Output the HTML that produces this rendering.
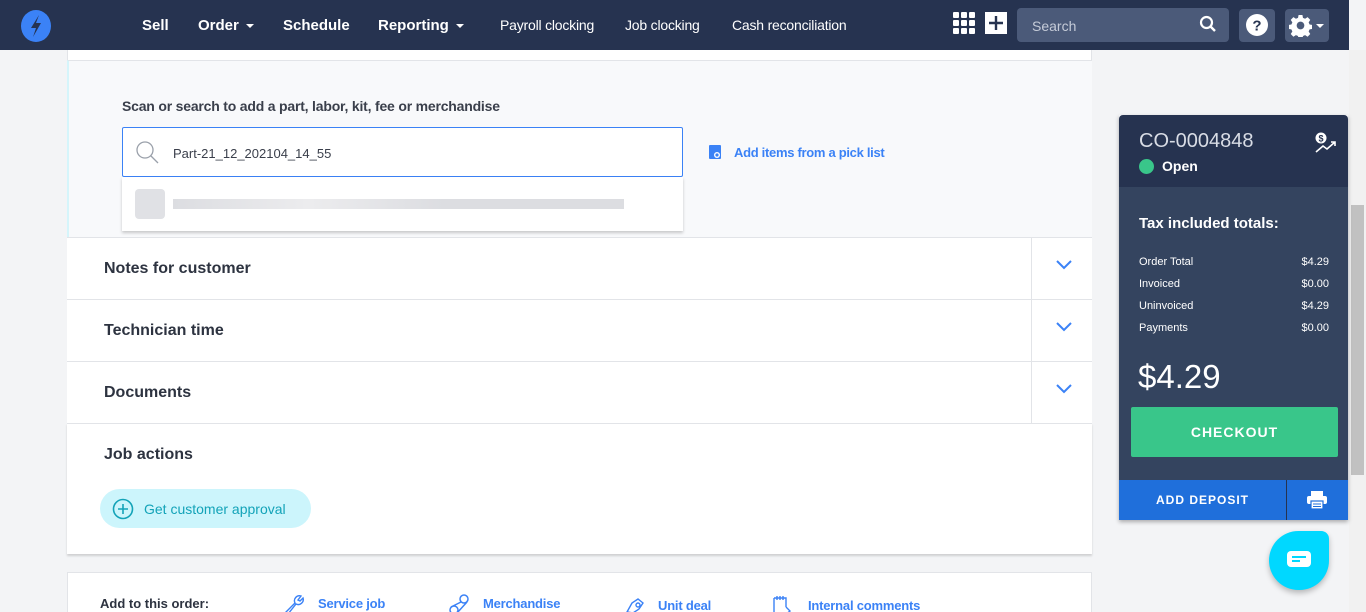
<!DOCTYPE html>
<html><head><style>
*{box-sizing:border-box;margin:0;padding:0}
html,body{width:1366px;height:612px;overflow:hidden}
body{background:#f3f4f6;font-family:"Liberation Sans",sans-serif;position:relative;color:#2d3340}
.nav{position:absolute;left:0;top:0;width:1349px;height:50px;background:#263350;color:#fff}
.nav .i{position:absolute;top:17px;font-size:15px;font-weight:bold}
.nav .s{position:absolute;top:17px;font-size:14px;letter-spacing:-0.2px}
.car{display:inline-block;border:4px solid transparent;border-top:4px solid #fff;border-bottom:0;margin-left:7px;vertical-align:middle}
.abs{position:absolute}
.card{position:absolute;left:67px;width:1025px;background:#fff;border:1px solid #e2e4e8}
.row{position:absolute;left:67px;width:1025px;height:62px;border-top:1px solid #e2e4e8;background:#fff}
.row span{position:absolute;left:37px;top:22px;font-size:16px;font-weight:bold;color:#2d3340}
.row .vd{position:absolute;left:964px;top:0;width:1px;height:61px;background:#e2e4e8}
.chev{position:absolute;left:989px;top:22px}
.rp{position:absolute;left:1119px;width:229px}
.tl{position:absolute;left:20px;font-size:11px;color:#fff}
.tr{position:absolute;right:19px;font-size:11px;color:#fff}
.lk{position:absolute;top:596px;font-size:13px;color:#3b82f6;font-weight:bold;letter-spacing:-0.2px}
</style></head><body>
<div class="nav">
<svg class="abs" style="left:19px;top:9px" width="34" height="34" viewBox="0 0 34 34"><ellipse cx="17" cy="17" rx="15" ry="16" fill="#3b82f6"/><path d="M20 6 L12 19 H17 L14 28 L22 14 H17 Z" fill="#263350"/></svg>
<span class="i" style="left:142px">Sell</span>
<span class="i" style="left:198px">Order<i class="car"></i></span>
<span class="i" style="left:283px">Schedule</span>
<span class="i" style="left:378px">Reporting<i class="car"></i></span>
<span class="s" style="left:500px">Payroll clocking</span>
<span class="s" style="left:625px">Job clocking</span>
<span class="s" style="left:732px">Cash reconciliation</span>
<svg class="abs" style="left:953px;top:12px" width="22" height="22" viewBox="0 0 22 22" fill="#fff"><rect x="0" y="0" width="6" height="6" rx="1"/><rect x="8" y="0" width="6" height="6" rx="1"/><rect x="16" y="0" width="6" height="6" rx="1"/><rect x="0" y="8" width="6" height="6" rx="1"/><rect x="8" y="8" width="6" height="6" rx="1"/><rect x="16" y="8" width="6" height="6" rx="1"/><rect x="0" y="16" width="6" height="6" rx="1"/><rect x="8" y="16" width="6" height="6" rx="1"/><rect x="16" y="16" width="6" height="6" rx="1"/></svg>
<svg class="abs" style="left:985px;top:12px" width="22" height="22"><rect width="22" height="22" fill="#fff"/><path d="M11 4V18M4 11H18" stroke="#263350" stroke-width="2.4"/></svg>
<div class="abs" style="left:1017px;top:8px;width:212px;height:34px;background:#4b5a79;border-radius:4px"><span class="abs" style="left:15px;top:10px;font-size:14px;color:#c5cbd8">Search</span><svg class="abs" style="left:182px;top:7px" width="18" height="18"><circle cx="7.5" cy="7.5" r="5.5" stroke="#fff" stroke-width="2.2" fill="none"/><path d="M11.5 11.5L16 16" stroke="#fff" stroke-width="2.4"/></svg></div>
<div class="abs" style="left:1239px;top:9px;width:36px;height:33px;background:#4b5a79;border-radius:4px"><svg class="abs" style="left:7px;top:5px" width="22" height="22"><circle cx="11" cy="11" r="11" fill="#fff"/><text x="11" y="16.5" font-size="15" font-weight="bold" text-anchor="middle" fill="#263350" font-family="Liberation Sans">?</text></svg></div>
<div class="abs" style="left:1285px;top:9px;width:44px;height:33px;background:#4b5a79;border-radius:4px"><svg class="abs" style="left:4px;top:5px" width="23" height="23" viewBox="0 0 24 24"><path fill="#fff" d="M10 1h4l.6 3 2.2 1 2.6-1.7 2.8 2.8-1.7 2.6 1 2.2 3 .6v4l-3 .6-1 2.2 1.7 2.6-2.8 2.8-2.6-1.7-2.2 1-.6 3h-4l-.6-3-2.2-1-2.6 1.7-2.8-2.8 1.7-2.6-1-2.2-3-.6v-4l3-.6 1-2.2-1.7-2.6 2.8-2.8 2.6 1.7 2.2-1z"/><circle cx="12" cy="12" r="4" fill="#4b5a79"/></svg><i class="car abs" style="left:31px;top:15px;margin:0"></i></div>
</div>
<div class="abs" style="left:1349px;top:50px;width:17px;height:562px;background:#f1f1f1"></div>
<div class="abs" style="left:1351px;top:205px;width:13px;height:270px;background:#c1c1c1"></div>

<div class="abs" style="left:67px;top:50px;width:1025px;height:187px;background:#fff;border-left:1px solid #e2e4e8;border-right:1px solid #e2e4e8"></div>
<div class="abs" style="left:67px;top:60px;width:1025px;height:177px;background:#f8f9fb;border-top:1px solid #e2e4e8;border-left:2px solid #d5f5fb"></div>
<div class="abs" style="left:122px;top:98px;font-size:14px;font-weight:bold;color:#3a3f4b;letter-spacing:-0.2px">Scan or search to add a part, labor, kit, fee or merchandise</div>
<div class="abs" style="left:122px;top:127px;width:561px;height:50px;background:#fff;border:1px solid #3b82f6;border-radius:2px"><svg class="abs" style="left:11px;top:11px" width="28" height="28"><circle cx="11" cy="11" r="8" stroke="#9aa0aa" stroke-width="1.3" fill="none"/><path d="M17 17L24 24" stroke="#9aa0aa" stroke-width="1.3"/></svg><span class="abs" style="left:50px;top:18px;font-size:13px;color:#3a3f4b">Part-21_12_202104_14_55</span></div>
<div class="abs" style="left:122px;top:177px;width:561px;height:54px;background:#fff;box-shadow:0 2px 3px rgba(0,0,0,.2)"><div class="abs" style="left:13px;top:12px;width:30px;height:30px;background:#e0e1e5;border-radius:4px"></div><div class="abs" style="left:51px;top:22px;width:451px;height:10px;background:linear-gradient(90deg,#dcdde1,#ececee 30%,#dcdde1 60%)"></div></div>
<svg class="abs" style="left:708px;top:144px" width="15" height="16"><rect x="1" y="1" width="12" height="14" rx="1" fill="#3b82f6"/><circle cx="9" cy="11" r="3" fill="#fff"/><circle cx="9" cy="11" r="1.6" fill="#3b82f6"/></svg>
<div class="abs" style="left:734px;top:145px;font-size:13px;font-weight:bold;color:#3b82f6;letter-spacing:-0.3px">Add items from a pick list</div>

<div class="row" style="top:237px"><span>Notes for customer</span><div class="vd"></div><svg class="chev" width="16" height="10"><path d="M1 1L8 8L15 1" stroke="#3b82f6" stroke-width="2" fill="none"/></svg></div>
<div class="row" style="top:299px"><span>Technician time</span><div class="vd"></div><svg class="chev" width="16" height="10"><path d="M1 1L8 8L15 1" stroke="#3b82f6" stroke-width="2" fill="none"/></svg></div>
<div class="row" style="top:361px"><span>Documents</span><div class="vd"></div><svg class="chev" width="16" height="10"><path d="M1 1L8 8L15 1" stroke="#3b82f6" stroke-width="2" fill="none"/></svg></div>
<div class="row" style="top:423px;height:131px;box-shadow:0 2px 2px rgba(0,0,0,.15)"><span>Job actions</span>
<div class="abs" style="left:33px;top:65px;width:211px;height:39px;background:#ccf5fc;border-radius:20px"><svg class="abs" style="left:12px;top:9px" width="22" height="22"><circle cx="11" cy="11" r="9.5" stroke="#13a3b8" stroke-width="1.6" fill="none"/><path d="M11 6V16M6 11H16" stroke="#13a3b8" stroke-width="1.6"/></svg><span style="left:44px;top:12px;font-size:14px;font-weight:normal;color:#13a3b8">Get customer approval</span></div></div>

<div class="card" style="top:572px;height:50px"></div>
<div class="abs" style="left:100px;top:596px;font-size:13px;font-weight:bold;color:#2d3340">Add to this order:</div>
<svg class="abs" style="left:283px;top:593px" width="22" height="22"><path d="M3 19L12 10A5 5 0 0 1 18 3L15 7L17 8L20 5A5 5 0 0 1 13 11L5 21Z" stroke="#3b82f6" stroke-width="1.4" fill="none"/></svg>
<span class="lk" style="left:318px">Service job</span>
<svg class="abs" style="left:447px;top:593px" width="24" height="22"><circle cx="17" cy="6" r="4" stroke="#3b82f6" stroke-width="1.5" fill="none"/><circle cx="7" cy="17" r="4" stroke="#3b82f6" stroke-width="1.5" fill="none"/><path d="M14 9L4 14M20 9L10 20" stroke="#3b82f6" stroke-width="1.5"/></svg>
<span class="lk" style="left:483px">Merchandise</span>
<svg class="abs" style="left:624px;top:595px" width="22" height="20"><path d="M3 17L8 8L14 4L19 8L15 14L9 18Z" stroke="#3b82f6" stroke-width="1.4" fill="none"/><circle cx="14" cy="10" r="2" stroke="#3b82f6" stroke-width="1.4" fill="none"/></svg>
<span class="lk" style="left:658px;top:598px">Unit deal</span>
<svg class="abs" style="left:772px;top:595px" width="22" height="20"><path d="M2 3H14V12M2 3V20M5 1V5M8 1V5M11 1V5M14 12L18 16L14 19" stroke="#3b82f6" stroke-width="1.4" fill="none"/></svg>
<span class="lk" style="left:808px;top:598px">Internal comments</span>

<div class="rp" style="top:115px;height:405px;box-shadow:0 2px 4px rgba(0,0,0,.3)">
<div class="abs" style="left:0;top:0;width:229px;height:72px;background:#263350;border-radius:4px 4px 0 0"></div>
<div class="abs" style="left:0;top:72px;width:229px;height:293px;background:#34445f"></div>
<div class="abs" style="left:20px;top:15px;font-size:20px;color:#d8dce5">CO-0004848</div>
<div class="abs" style="left:20px;top:44px;width:15px;height:15px;border-radius:50%;background:#39c68a"></div>
<div class="abs" style="left:43px;top:43px;font-size:14px;font-weight:bold;color:#fff">Open</div>
<svg class="abs" style="left:195px;top:17px" width="24" height="22"><circle cx="7" cy="6" r="5.5" fill="#fff"/><text x="7" y="9.5" font-size="9" font-weight="bold" text-anchor="middle" fill="#263350" font-family="Liberation Sans">$</text><path d="M2 20L9 14L13 17L21 10M17 10H21V14" stroke="#fff" stroke-width="1.6" fill="none"/></svg>
<div class="abs" style="left:20px;top:100px;font-size:15px;font-weight:bold;color:#fff">Tax included totals:</div>
<span class="tl" style="top:141px">Order Total</span><span class="tr" style="top:141px">$4.29</span>
<span class="tl" style="top:163px">Invoiced</span><span class="tr" style="top:163px">$0.00</span>
<span class="tl" style="top:185px">Uninvoiced</span><span class="tr" style="top:185px">$4.29</span>
<span class="tl" style="top:207px">Payments</span><span class="tr" style="top:207px">$0.00</span>
<div class="abs" style="left:19px;top:243px;font-size:33px;color:#fff">$4.29</div>
<div class="abs" style="left:12px;top:292px;width:207px;height:50px;background:#39c68a;border-radius:2px;color:#fff;font-size:14px;font-weight:bold;text-align:center;line-height:50px;letter-spacing:1px">CHECKOUT</div>
<div class="abs" style="left:0;top:365px;width:167px;height:40px;background:#1f6fdb;color:#fff;font-size:12px;font-weight:bold;text-align:center;line-height:40px;letter-spacing:1px">ADD DEPOSIT</div>
<div class="abs" style="left:167px;top:365px;width:1px;height:40px;background:#263350"></div>
<div class="abs" style="left:168px;top:365px;width:61px;height:40px;background:#1f6fdb"><svg class="abs" style="left:19px;top:10px" width="22" height="20"><rect x="5" y="1" width="12" height="5" fill="#fff"/><rect x="1" y="6" width="20" height="8" rx="2" fill="#fff"/><rect x="5" y="11" width="12" height="8" fill="#fff" stroke="#1f6fdb" stroke-width="1.2"/><path d="M7 14H15M7 16.5H15" stroke="#1f6fdb" stroke-width="1"/></svg></div>
</div>
<div class="abs" style="left:1269px;top:531px;width:60px;height:59px;background:#00d8ff;border-radius:30px 8px 30px 30px;box-shadow:0 3px 6px rgba(0,0,0,.25)"><svg class="abs" style="left:18px;top:20px" width="24" height="18"><rect x="0" y="0" width="24" height="16" rx="4" fill="#fff"/><path d="M5 6H19M5 10H13" stroke="#00d8ff" stroke-width="2"/></svg></div>
</body></html>
